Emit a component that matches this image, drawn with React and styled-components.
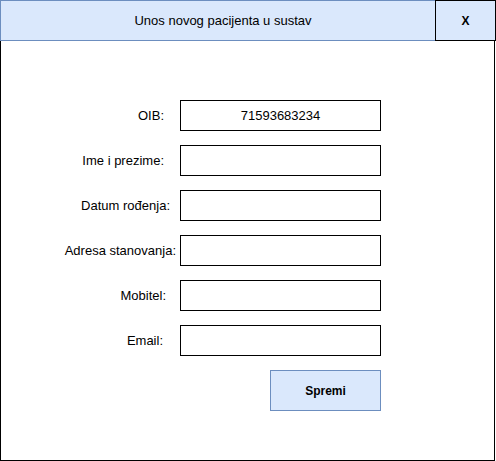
import React from "react";
import styled, { createGlobalStyle } from "styled-components";

const GlobalStyle = createGlobalStyle`
  body {
    margin: 0;
    background: #fff;
    font-family: "Liberation Sans", Arial, sans-serif;
    color: #000;
  }
`;

const fields = [
  { label: "OIB:", value: "71593683234", gap: 16 },
  { label: "Ime i prezime:", value: "", gap: 16 },
  { label: "Datum rođenja:", value: "", gap: 10 },
  { label: "Adresa stanovanja:", value: "", gap: 4 },
  { label: "Mobitel:", value: "", gap: 14 },
  { label: "Email:", value: "", gap: 17 },
];

function App() {
  return (
    <>
      <GlobalStyle />
      <S.Window>
        <S.Header>
          <S.Title>Unos novog pacijenta u sustav</S.Title>
          <S.Close>X</S.Close>
        </S.Header>
        <S.Body>
          <S.Form>
            {fields.map((f) => (
              <React.Fragment key={f.label}>
                <S.Label $gap={f.gap}>{f.label}</S.Label>
                <S.Input>{f.value}</S.Input>
              </React.Fragment>
            ))}
            <S.Spacer />
            <S.Button>Spremi</S.Button>
          </S.Form>
        </S.Body>
      </S.Window>
    </>
  );
}

export default App;

const S = {
  Window: styled.div`
    width: 496px;
    height: 461px;
    display: flex;
    flex-direction: column;
    font-size: 13px;
  `,

  Header: styled.div`
    display: flex;
    height: 41px;
    flex-shrink: 0;
  `,

  Title: styled.div`
    box-sizing: border-box;
    width: 435px;
    height: 41px;
    padding-left: 10px;
    border: 1px solid #6c8ebf;
    border-right: none;
    background: #dae8fc;
    display: flex;
    align-items: center;
    justify-content: center;
  `,

  Close: styled.div`
    box-sizing: border-box;
    width: 61px;
    height: 41px;
    border: 1px solid #000;
    background: #dae8fc;
    display: flex;
    align-items: center;
    justify-content: center;
    font-weight: bold;
    font-size: 12px;
  `,

  Body: styled.div`
    box-sizing: border-box;
    width: 495px;
    flex: 1;
    border: 1px solid #000;
    border-top: none;
    padding-top: 59px;
  `,

  Form: styled.div`
    display: grid;
    grid-template-columns: 179px 201px;
    grid-auto-rows: 31px;
    row-gap: 14px;
  `,

  Label: styled.div`
    display: flex;
    align-items: center;
    justify-content: flex-end;
    padding-right: ${({ $gap }) => $gap}px;
    white-space: nowrap;
  `,

  Input: styled.div`
    box-sizing: border-box;
    border: 1px solid #000;
    display: flex;
    align-items: center;
    justify-content: center;
  `,

  Spacer: styled.div``,

  Button: styled.div`
    box-sizing: border-box;
    justify-self: end;
    width: 111px;
    height: 41px;
    border: 1px solid #6c8ebf;
    background: #dae8fc;
    display: flex;
    align-items: center;
    justify-content: center;
    font-weight: bold;
    font-size: 12px;
  `,
};
